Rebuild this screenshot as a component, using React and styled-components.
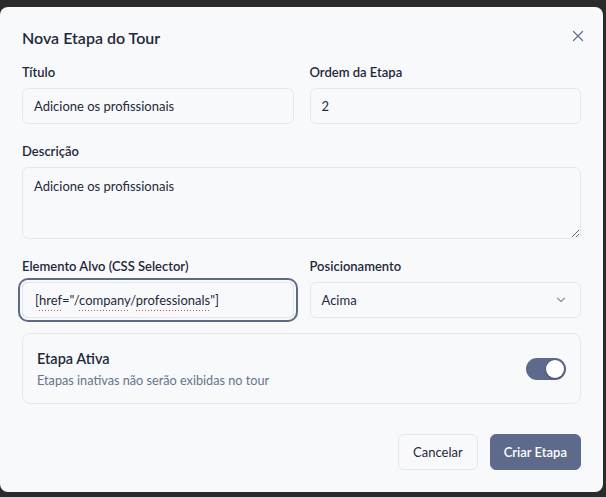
import React from "react";
import styled, { createGlobalStyle } from "styled-components";

const GlobalStyle = createGlobalStyle`
  html, body {
    margin: 0;
    padding: 0;
    background: #2b2b2b;
  }
  body {
    font-family: Lato, "Liberation Sans", sans-serif;
    color: #1e293b;
  }
  * {
    box-sizing: border-box;
  }
`;

const Dialog = styled.div`
  position: relative;
  width: 603px;
  height: 485px;
  margin-top: 7px;
  padding: 19px 22px 22px;
  background: #f8f9fb;
  border-radius: 8px;
  display: flex;
  flex-direction: column;
`;

const Title = styled.h2`
  margin: 0;
  font-size: 16px;
  line-height: 24px;
  font-weight: 600;
  color: #1e293b;
`;

const CloseButton = styled.button`
  position: absolute;
  top: 22px;
  right: 18px;
  width: 14px;
  height: 14px;
  padding: 0;
  border: none;
  background: none;
  color: #64748b;
  display: flex;
  align-items: center;
  justify-content: center;
  cursor: pointer;
`;

const Form = styled.div`
  margin-top: 12px;
  display: grid;
  grid-template-columns: 1fr 1fr;
  column-gap: 16px;
  row-gap: 17px;
`;

const Field = styled.div`
  display: flex;
  flex-direction: column;
  gap: 6px;
  grid-column: ${(p) => (p.$full ? "1 / -1" : "auto")};
`;

const Label = styled.label`
  font-size: 13px;
  line-height: 20px;
  font-weight: 600;
  color: #1e293b;
`;

const Input = styled.input`
  height: 36px;
  padding: 0 11px;
  border: 1px solid #e3e8f0;
  border-radius: 6px;
  background: transparent;
  font-family: inherit;
  font-size: 13px;
  color: #1e293b;
  outline: none;
`;

const FocusBox = styled.div`
  height: 36px;
  padding: 0 12px;
  display: flex;
  align-items: center;
  border: 1px solid #e3e8f0;
  border-radius: 6px;
  font-size: 13px;
  color: #1e293b;
  box-shadow: 0 0 0 2px #f8f9fb, 0 0 0 4px #5d6985;
`;

// spell-check squiggle
const Misspelled = styled.span`
  padding-bottom: 3px;
  background-image: linear-gradient(to right, #e5483f 50%, transparent 50%);
  background-size: 3px 1px;
  background-repeat: repeat-x;
  background-position: 0 100%;
`;

const TextArea = styled.textarea`
  height: 72px;
  padding: 8px 11px;
  border: 1px solid #e3e8f0;
  border-radius: 6px;
  background: transparent;
  font-family: inherit;
  font-size: 13px;
  line-height: 20px;
  color: #1e293b;
  resize: vertical;
  outline: none;
`;

const Select = styled.div`
  height: 36px;
  padding: 0 14px 0 11px;
  border: 1px solid #e3e8f0;
  border-radius: 6px;
  display: flex;
  align-items: center;
  justify-content: space-between;
  font-size: 13px;
  color: #1e293b;
`;

const Card = styled.div`
  margin-top: 15px;
  height: 71px;
  padding: 0 14px;
  border: 1px solid #e3e8f0;
  border-radius: 8px;
  display: flex;
  align-items: center;
  justify-content: space-between;
`;

const CardText = styled.div`
  display: flex;
  flex-direction: column;
  gap: 2px;
`;

const CardTitle = styled.div`
  font-size: 14.5px;
  line-height: 20px;
  font-weight: 600;
  color: #1e293b;
`;

const CardHint = styled.div`
  font-size: 12.7px;
  line-height: 18px;
  color: #64748b;
`;

const Switch = styled.button`
  width: 40px;
  height: 22px;
  padding: 2px;
  border: none;
  border-radius: 11px;
  background: #5d6a8b;
  display: flex;
  justify-content: ${(p) => (p.$on ? "flex-end" : "flex-start")};
  cursor: pointer;
`;

const Knob = styled.span`
  width: 18px;
  height: 18px;
  border-radius: 50%;
  background: #ffffff;
  box-shadow: 0 1px 3px rgba(0, 0, 0, 0.25);
`;

const Footer = styled.div`
  margin-top: auto;
  display: flex;
  justify-content: flex-end;
  gap: 12px;
`;

const Button = styled.button`
  height: 36px;
  padding: 0 ${(p) => (p.$primary ? "13px" : "14px")};
  border-radius: 6px;
  border: 1px solid ${(p) => (p.$primary ? "#5e6a8b" : "#e3e8f0")};
  background: ${(p) => (p.$primary ? "#5e6a8b" : "#f8f9fb")};
  color: ${(p) => (p.$primary ? "#ffffff" : "#1e293b")};
  font-family: inherit;
  font-size: 13px;
  font-weight: ${(p) => (p.$primary ? 600 : 400)};
  cursor: pointer;
`;

function App() {
  return (
    <>
      <GlobalStyle />
      <Dialog>
        <Title>Nova Etapa do Tour</Title>
        <CloseButton aria-label="Fechar">
          <svg width="14" height="14" viewBox="0 0 14 14" fill="none">
            <path
              d="M2.5 2.5l9 9M11.5 2.5l-9 9"
              stroke="currentColor"
              strokeWidth="1.3"
              strokeLinecap="round"
            />
          </svg>
        </CloseButton>

        <Form>
          <Field>
            <Label>Título</Label>
            <Input defaultValue="Adicione os profissionais" />
          </Field>
          <Field>
            <Label>Ordem da Etapa</Label>
            <Input defaultValue="2" />
          </Field>
          <Field $full>
            <Label>Descrição</Label>
            <TextArea defaultValue="Adicione os profissionais" />
          </Field>
          <Field>
            <Label>Elemento Alvo (CSS Selector)</Label>
            <FocusBox>
              <span>
                [<Misspelled>href</Misspelled>="/<Misspelled>company</Misspelled>/<Misspelled>professionals</Misspelled>"]
              </span>
            </FocusBox>
          </Field>
          <Field>
            <Label>Posicionamento</Label>
            <Select>
              <span>Acima</span>
              <svg width="10" height="6" viewBox="0 0 10 6" fill="none">
                <path
                  d="M1.5 1.2L5 4.5l3.5-3.3"
                  stroke="#8a94a6"
                  strokeWidth="1.2"
                  strokeLinecap="round"
                  strokeLinejoin="round"
                />
              </svg>
            </Select>
          </Field>
        </Form>

        <Card>
          <CardText>
            <CardTitle>Etapa Ativa</CardTitle>
            <CardHint>Etapas inativas não serão exibidas no tour</CardHint>
          </CardText>
          <Switch $on aria-label="Etapa ativa">
            <Knob />
          </Switch>
        </Card>

        <Footer>
          <Button>Cancelar</Button>
          <Button $primary>Criar Etapa</Button>
        </Footer>
      </Dialog>
    </>
  );
}

export default App;
